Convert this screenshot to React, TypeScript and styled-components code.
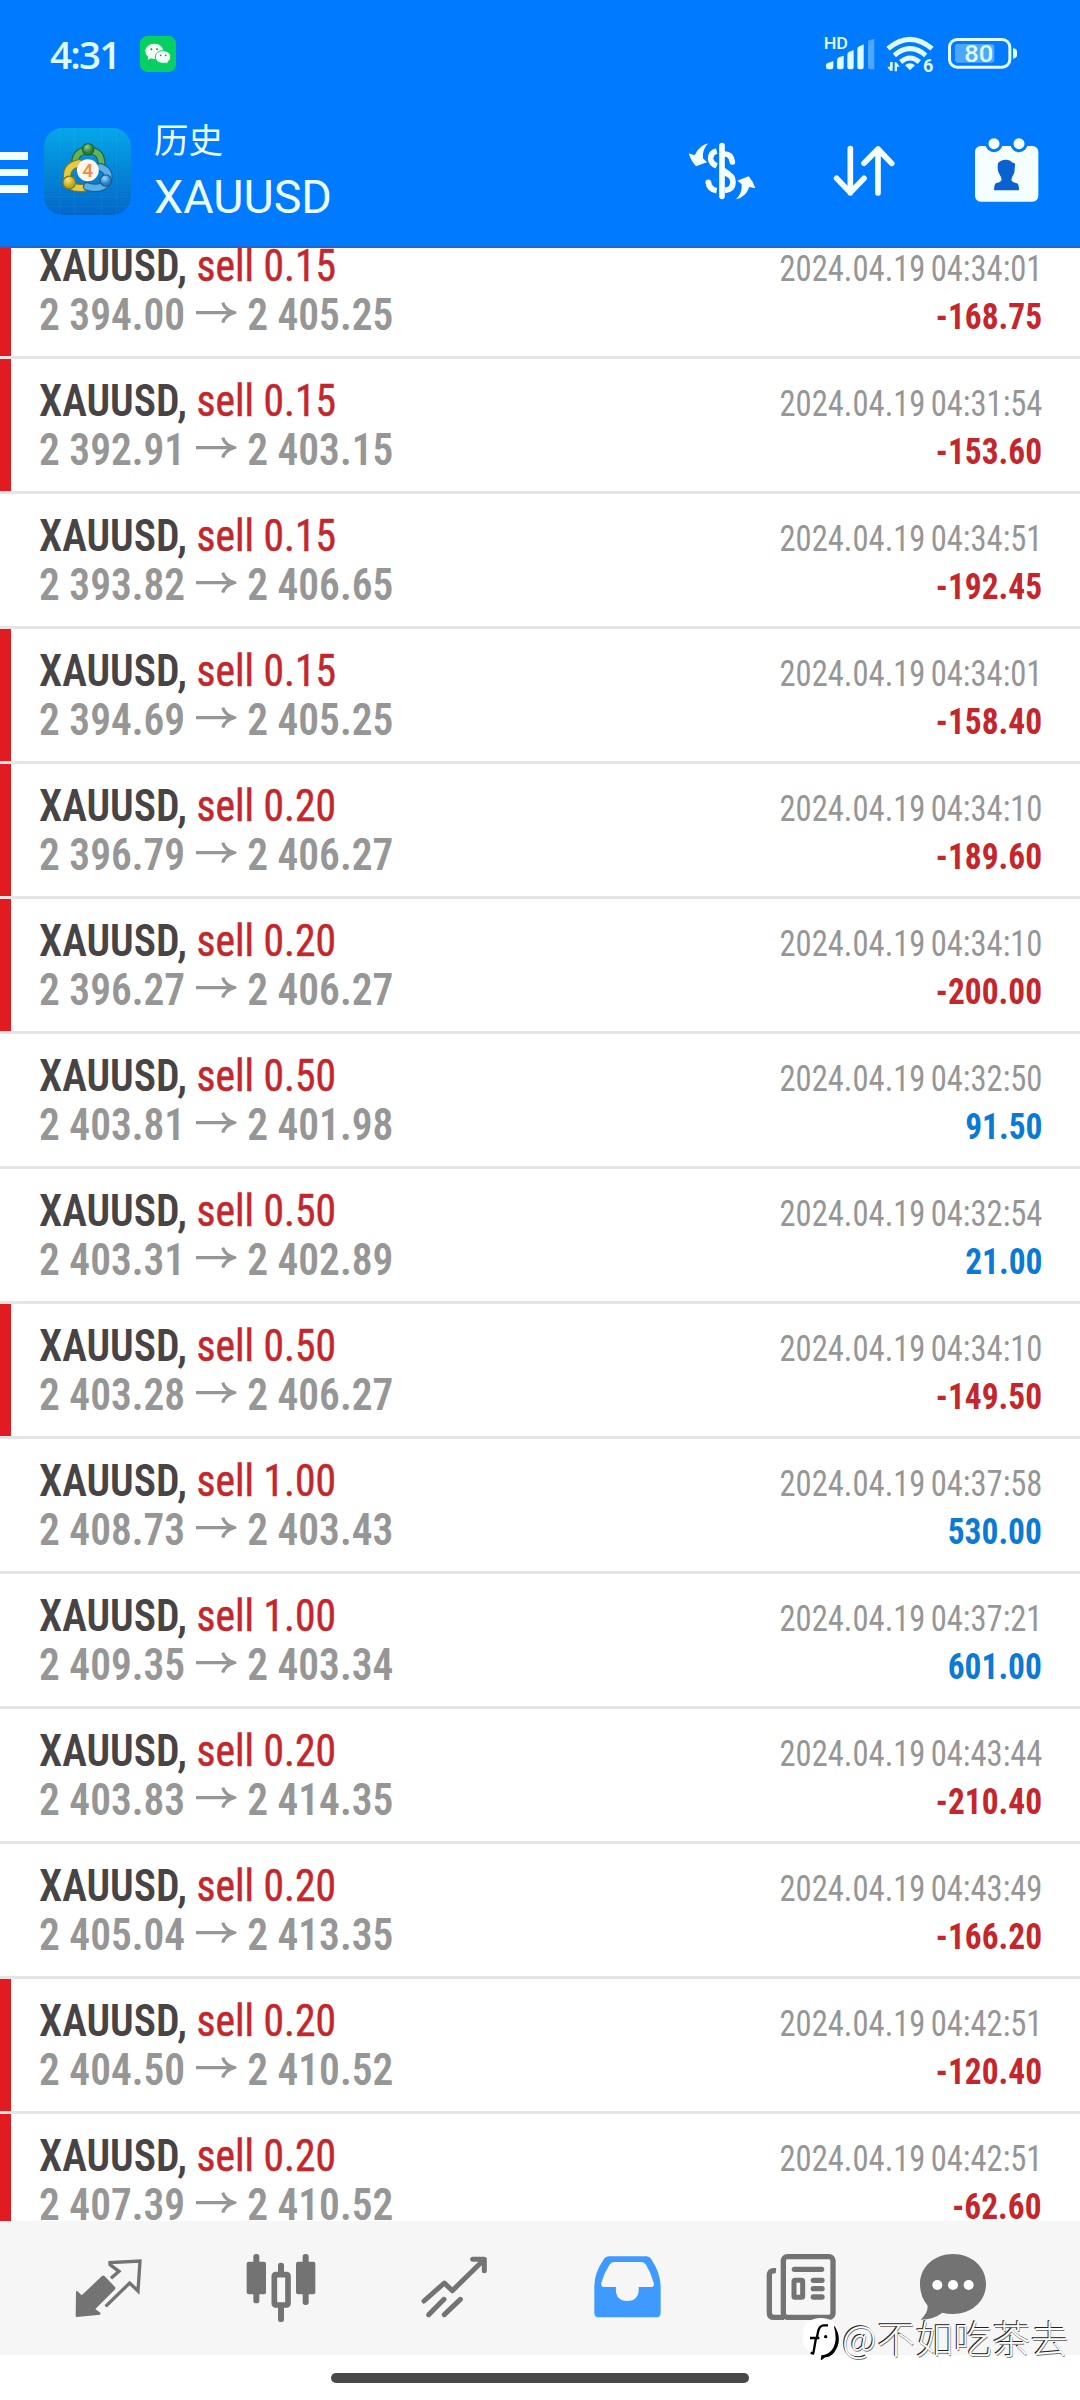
import React from "react";
import styled, { createGlobalStyle } from "styled-components";

const GlobalStyle = createGlobalStyle`
  * { box-sizing: border-box; }
  body { margin: 0; background: #fff; }
  svg { display: block; flex: none; }
`;

const condensed = `"Roboto Condensed", Roboto, sans-serif`;
const cjk = `Roboto, "Noto Sans CJK SC", sans-serif`;

const Screen = styled.div`
  position: relative;
  width: 1080px;
  height: 2400px;
  display: flex;
  flex-direction: column;
  overflow: hidden;
  background: #fff;
`;

const Header = styled.header`
  flex: none;
  height: 248px;
  background: #007aff;
  border-bottom: 2px solid #1c68cf;
  color: #ecffff;
`;

const StatusBar = styled.div`
  display: flex;
  align-items: center;
  height: 108px;
  padding: 0 60px 0 50px;
`;

const Clock = styled.span`
  width: 90px;
  font: 600 38.5px/1 "Open Sans", sans-serif;
  letter-spacing: -1.8px;
  color: #dffbff;
`;

const Spacer = styled.div`
  flex: 1;
`;

const Toolbar = styled.div`
  display: flex;
  align-items: center;
  height: 127px;
`;

const Menu = styled.div`
  display: flex;
  flex-direction: column;
  gap: 9px;
  width: 28px;
  margin: 2px 16px 0 0;
`;

const MenuLine = styled.i`
  height: 7.6px;
  background: #f6ffff;
`;

const Titles = styled.div`
  display: flex;
  flex-direction: column;
  margin-left: 23px;
  font-family: ${cjk};
`;

const Title = styled.span`
  font-size: 34.5px;
  line-height: 50px;
`;

const Subtitle = styled.span`
  font-size: 46.6px;
  line-height: 62px;
`;

const Actions = styled.div`
  display: flex;
  gap: 70px;
  margin-top: -3px;
  padding-right: 38px;
`;

const List = styled.main`
  flex: none;
  height: 1973px;
  overflow: hidden;
`;

const Rows = styled.div`
  margin-top: -24px;
`;

const Row = styled.article<{ $closed?: boolean }>`
  height: 135px;
  padding: 18px 38px 0 39px;
  border-bottom: 3px solid #e5e5e5;
  background: ${(p) => (p.$closed ? "linear-gradient(#e11b1f, #e11b1f) 0 0 / 11px 100% no-repeat" : "none")};
  background-clip: padding-box;
`;

const Line = styled.div`
  display: flex;
  justify-content: space-between;
  align-items: baseline;
  height: 48px;
  line-height: 48px;
  font-family: ${condensed};
  white-space: pre;
`;

const Order = styled.span`
  font-size: 44px;
  transform: scaleX(0.945);
  transform-origin: left;
`;

const Symbol = styled.b`
  font-weight: 600;
  color: #484446;
`;

const Side = styled.span`
  font-weight: 400;
  color: #c4262c;
  -webkit-text-stroke: 0.5px #c4262c;
`;

const Prices = styled.span`
  display: flex;
  align-items: baseline;
  font-size: 44px;
  font-weight: 600;
  color: #969696;
  transform: translateY(0.6px) scaleX(0.94);
  transform-origin: left;
`;

const Arrow = styled.svg`
  margin: 0 11px 0 12px;
  position: relative;
  top: -6px;
`;

const Time = styled.time`
  font-size: 36.5px;
  word-spacing: -2.5px;
  color: #969696;
  transform: scaleX(0.893);
  transform-origin: right;
`;

const Profit = styled.span<{ $up: boolean }>`
  font-size: 36.5px;
  font-weight: 700;
  color: ${(p) => (p.$up ? "#0a7ad6" : "#c4262c")};
  transform: scaleX(0.915);
  transform-origin: right;
`;

const TabBar = styled.nav`
  flex: none;
  display: grid;
  grid-template-columns: 173px 173px 174px 173px 152px 72px;
  align-items: center;
  height: 134px;
  padding-left: 72px;
  background: #f6f6f6;
`;

const HomeArea = styled.footer`
  flex: 1;
  display: flex;
  justify-content: center;
  padding-top: 18px;
`;

const HomePill = styled.i`
  width: 418px;
  height: 10px;
  border-radius: 5px;
  background: #484848;
`;

const Watermark = styled.div`
  position: absolute;
  left: 802px;
  top: 2314px;
  display: flex;
  align-items: center;
  gap: 2px;
  font: 300 38px/46px "Noto Sans CJK SC", sans-serif;
  letter-spacing: 0.4px;
  color: #fff;
  text-shadow: -1px -1px 0 #222, 0.5px 0.5px 0 #777;
  white-space: nowrap;
`;

type Deal = [lot: string, open: string, close: string, time: string, profit: string, closed: boolean];

const deals: Deal[] = [
  ["0.15", "2 394.00", "2 405.25", "04:34:01", "-168.75", true],
  ["0.15", "2 392.91", "2 403.15", "04:31:54", "-153.60", true],
  ["0.15", "2 393.82", "2 406.65", "04:34:51", "-192.45", false],
  ["0.15", "2 394.69", "2 405.25", "04:34:01", "-158.40", true],
  ["0.20", "2 396.79", "2 406.27", "04:34:10", "-189.60", true],
  ["0.20", "2 396.27", "2 406.27", "04:34:10", "-200.00", true],
  ["0.50", "2 403.81", "2 401.98", "04:32:50", "91.50", false],
  ["0.50", "2 403.31", "2 402.89", "04:32:54", "21.00", false],
  ["0.50", "2 403.28", "2 406.27", "04:34:10", "-149.50", true],
  ["1.00", "2 408.73", "2 403.43", "04:37:58", "530.00", false],
  ["1.00", "2 409.35", "2 403.34", "04:37:21", "601.00", false],
  ["0.20", "2 403.83", "2 414.35", "04:43:44", "-210.40", false],
  ["0.20", "2 405.04", "2 413.35", "04:43:49", "-166.20", false],
  ["0.20", "2 404.50", "2 410.52", "04:42:51", "-120.40", true],
  ["0.20", "2 407.39", "2 410.52", "04:42:51", "-62.60", true],
];

const WeChat = () => (
  <svg width="36" height="36" viewBox="0 0 108 108">
    <rect width="108" height="108" rx="22" fill="#07cf62" />
    <path d="M43 23c-15 0-27 10-27 23 0 7 4 13 9 17l-2 9 10-5c3 1 7 2 10 2 15 0 27-10 27-23S58 23 43 23z" fill="#f2fff6" />
    <path d="M69 44c-13 0-23 8-23 19s10 19 23 19c3 0 5 0 7-1l8 4-1-7c5-3 9-9 9-15 0-11-10-19-23-19z" fill="#f2fff6" stroke="#07cf62" strokeWidth="3" />
    <g fill="#2a8a55"><circle cx="34" cy="40" r="3" /><circle cx="51" cy="40" r="3" /><circle cx="62" cy="58" r="2.6" /><circle cx="77" cy="58" r="2.6" /></g>
  </svg>
);

const StatusIcons = () => (
  <svg width="196" height="40" viewBox="552 104 588 120" fill="#dffbff">
    <text x="551" y="150" fontFamily="Roboto" fontWeight="500" fontSize="48" textLength="73" lengthAdjust="spacingAndGlyphs">HD</text>
    <path d="M558 198q0-4 4-6l18-7v18q0 7-7 7h-8q-7 0-7-7zM591 184q0-8 6-10l14-5v35q0 6-6 6h-8q-6 0-6-6zM622 166q0-7 6-9l13-5v52q0 6-6 6h-7q-6 0-6-6zM652 150q0-7 6-9l13-6v69q0 6-6 6h-7q-6 0-6-6z" />
    <path d="M684 128q0-4 5-6l14-3v91h-13q-6 0-6-6z" opacity=".35" />
    <g fill="none" stroke="#dffbff" strokeWidth="15"><path d="M744 148q66-56 132 0" /><path d="M763 168q47-40 94 0" /><path d="M782 188q28-24 56 0" /></g>
    <path d="M795 198q15-12 30 0l-15 15z" />
    <path d="M758 188v26h-8l-8-12h8v-14zM764 216v-27h5l10 13h-8v14z" />
    <text x="849" y="217" fontFamily="Roboto" fontWeight="700" fontSize="55" textLength="31" lengthAdjust="spacingAndGlyphs">6</text>
    <rect x="928.5" y="120.500" width="181" height="83" rx="23" fill="none" stroke="#dffbff" strokeWidth="9" />
    <rect x="945" y="134" width="118" height="56" rx="8" opacity=".35" />
    <path d="M1119 147q12 1 12 10v11q0 9-12 10z" />
    <text x="973" y="188" fontFamily="Roboto" fontWeight="500" fontSize="72" textLength="87" lengthAdjust="spacingAndGlyphs">80</text>
  </svg>
);

const AppLogo = () => (
  <svg width="87" height="87" viewBox="132 384 262 262">
    <defs>
      <linearGradient id="sky" x1="0" y1="0" x2="0" y2="1"><stop offset="0" stopColor="#05a6ea" /><stop offset=".5" stopColor="#0386d6" /><stop offset="1" stopColor="#0368cb" /></linearGradient>
      <radialGradient id="green" cx=".4" cy=".3"><stop offset="0" stopColor="#8fd08a" /><stop offset="1" stopColor="#2c7d35" /></radialGradient>
      <radialGradient id="gold" cx=".4" cy=".3"><stop offset="0" stopColor="#f6e87c" /><stop offset="1" stopColor="#c0a820" /></radialGradient>
      <radialGradient id="blue" cx=".4" cy=".3"><stop offset="0" stopColor="#9fdcfa" /><stop offset="1" stopColor="#2a80c4" /></radialGradient>
    </defs>
    <rect x="132" y="384" width="262" height="262" rx="56" fill="url(#sky)" />
    <path d="M180 384v262M224 384v262M305 384v262M350 384v262M132 420h262M132 590h262M132 620h262" stroke="#fff" strokeOpacity=".05" strokeWidth="3" />
    <g fill="none" strokeLinecap="round">
      <path d="M226 494q-2-42 39-42t40 42" stroke="#23672d" strokeWidth="24" />
      <path d="M226 494q-2-42 39-42t40 42" stroke="#62b35f" strokeWidth="17" />
      <path d="M238 490q-42 8-36 50 10 30 50 24" stroke="#857718" strokeWidth="25" />
      <path d="M238 490q-42 8-36 50 10 30 50 24" stroke="#e0cc46" strokeWidth="18" />
      <path d="M302 502q30 12 22 42-18 30-62 16" stroke="#1c5f98" strokeWidth="26" />
      <path d="M302 502q30 12 22 42-18 30-62 16" stroke="#5cb0e6" strokeWidth="19" />
    </g>
    <g strokeWidth="4">
      <circle cx="265" cy="448" r="17" fill="url(#green)" stroke="#23672d" />
      <circle cx="208" cy="548" r="19" fill="url(#gold)" stroke="#857718" />
      <circle cx="318" cy="542" r="17" fill="url(#blue)" stroke="#1c5f98" />
    </g>
    <circle cx="264" cy="511" r="33" fill="#fff6ea" />
    <text x="264" y="532" textAnchor="middle" fontFamily="Roboto" fontWeight="500" fontSize="58" fill="#f0884a">4</text>
  </svg>
);

const CurrencyIcon = () => (
  <svg width="72" height="72" viewBox="138 402 216 216">
    <g fill="none" stroke="#f6ffff" strokeWidth="17">
      <path d="M230 453q-19 5-18 24 1 13 18 21" />
      <path d="M255 462q19 0 22 24" strokeLinecap="round" />
      <path d="M255 519q24 6 24 28 0 22-24 24" />
      <path d="M205 546q2 22 25 26" />
      <path d="M246 437v152" strokeLinecap="round" />
      <path d="M247 509l20 14" />
    </g>
    <circle cx="205" cy="547" r="8.500" fill="#f6ffff" />
    <path d="M205 430q-19 18-16 45l12 12-33 12q-15-16-22-39l18 6q14-30 41-36z" fill="#f6ffff" />
    <path d="M288 598q19-18 17-45l-13-11 34-13q14 16 20 36l-18-4q-11 31-40 37z" fill="#f6ffff" />
  </svg>
);

const SortIcon = () => (
  <svg width="72" height="72" viewBox="567 402 216 216" fill="none" stroke="#f6ffff" strokeWidth="17" strokeLinecap="round" strokeLinejoin="round">
    <path d="M634 446v132M593 535l41 43 41-43M717 579V447M675 490l42-43 41 43" />
  </svg>
);

const CalendarIcon = () => (
  <svg width="72" height="72" viewBox="990 402 216 216">
    <rect x="1005" y="438" width="190" height="167" rx="17" fill="#f6ffff" />
    <g fill="#f6ffff" stroke="#007aff" strokeWidth="9"><circle cx="1062" cy="431" r="21" /><circle cx="1137" cy="431" r="21" /></g>
    <path d="M1089 437v-14h20v14z" fill="#007aff" />
    <path d="M1100 479q10 0 18 9 9-1 7 8l-2 22q-8 14-9 21 2 8 17 11 6 3 6 21h-75q0-19 7-22 14-3 16-10-1-8-9-21-5-13-2-28 8-12 26-11z" fill="#0a62d0" />
  </svg>
);

const grey = "#737373";

const tabs = [
  <svg key="quotes" width="72" height="72" viewBox="216 156 216 216">
    <path d="M306 228q4-3 8 1l31 32q3 4-1 8l-58 58 16 12-2 5-69 7q-4 0-4-4l1-72 3-3 14 14z" fill={grey} />
    <path d="M333 235l24-21-27-20v-6l90-5-6 90-25-24-72 70" fill="none" stroke={grey} strokeWidth="10" />
  </svg>,
  <svg key="charts" width="72" height="72" viewBox="735 156 216 216" fill={grey}>
    <rect x="760" y="162" width="18" height="148" rx="8" />
    <rect x="740" y="185" width="58" height="98" rx="6" />
    <rect x="908" y="162" width="18" height="153" rx="8" />
    <rect x="888" y="185" width="58" height="98" rx="6" />
    <rect x="834" y="188" width="18" height="40" rx="8" />
    <rect x="834" y="312" width="18" height="54" rx="7" />
    <rect x="823" y="224" width="41" height="91" rx="4" fill="#f6f6f6" stroke={grey} strokeWidth="17" />
  </svg>,
  <svg key="trade" width="72" height="72" viewBox="174 156 216 216" fill="none" stroke={grey} strokeWidth="15" strokeLinecap="round" strokeLinejoin="round">
    <path d="M192 303l61-54 24 23 94-92M338 178h35v34M206 344l46-46M253 344l48-46" />
  </svg>,
  <svg key="history" width="72" height="72" viewBox="696 156 216 216">
    <path fillRule="evenodd" d="M748 169h110q12 0 17 11 25 36 27 77v81q0 14-14 14H717q-14 0-14-14v-81q1-40 27-77 6-11 18-11zM762 186q-9 0-14 9-16 25-24 53-2 13 8 13h36q-4 41 34 42 37-1 34-42h36q13 0 9-13-8-30-23-54-5-8-14-8z" fill="#3f9aff" />
  </svg>,
  <svg key="news" width="72" height="72" viewBox="135 156 216 216" fill="none" stroke={grey} strokeWidth="16" strokeLinecap="round">
    <rect x="190" y="170" width="149" height="182" rx="12" />
    <path d="M168 212q-20-2-20 14v112q0 14 14 14h30" strokeLinecap="butt" />
    <path d="M223 208h82M280 241h26M280 266h26M280 291h26" />
    <rect x="222" y="241" width="26" height="51" rx="3" strokeWidth="15" />
  </svg>,
  <svg key="chat" width="72" height="72" viewBox="591 156 216 216">
    <path d="M699 162c55 0 99 38 99 90s-44 90-99 90q-17 0-32-4-27 21-65 21 22-20 21-42-23-27-23-65c0-52 44-90 99-90z" fill={grey} />
    <g fill="#fff"><circle cx="652" cy="255" r="15" /><circle cx="699" cy="255" r="15" /><circle cx="746" cy="255" r="15" /></g>
  </svg>,
];

const WatermarkLogo = () => (
  <svg width="38" height="46" viewBox="20 20 114 138">
    <path d="M74 32q58 0 58 56 0 38-28 52l-28 17-2-17Q22 140 22 88q0-54 52-56z" fill="#fff" />
    <path d="M98 54H84q-12 1-16 20l-4 20M44 92h28M62 92l-8 46M46 136l10 4" fill="none" stroke="#000" strokeWidth="7" />
    <path d="M118 56q26 42-2 80-10 12-26 14l-14 10 2-16q40-6 43-50 0-20-5-36z" />
    <circle cx="91" cy="88" r="5" />
  </svg>
);

export default function App() {
  return (
    <Screen>
      <GlobalStyle />
      <Header>
        <StatusBar>
          <Clock>4:31</Clock>
          <WeChat />
          <Spacer />
          <StatusIcons />
        </StatusBar>
        <Toolbar>
          <Menu>
            <MenuLine />
            <MenuLine />
            <MenuLine />
          </Menu>
          <AppLogo />
          <Titles>
            <Title>历史</Title>
            <Subtitle>XAUUSD</Subtitle>
          </Titles>
          <Spacer />
          <Actions>
            <CurrencyIcon />
            <SortIcon />
            <CalendarIcon />
          </Actions>
        </Toolbar>
      </Header>
      <List>
        <Rows>
          {deals.map(([lot, open, close, time, profit, closed], i) => (
            <Row key={i} $closed={closed}>
              <Line>
                <Order>
                  <Symbol>XAUUSD,</Symbol> <Side>sell {lot}</Side>
                </Order>
                <Time>2024.04.19 {time}</Time>
              </Line>
              <Line>
                <Prices>
                  {open}
                  <Arrow width="43" height="22" viewBox="0 0 43 22" fill="none" stroke="#969696" strokeWidth="3.4">
                    <path d="M0 11h40M28.500 1q2 7 12 10-10 3-12 10" />
                  </Arrow>
                  {close}
                </Prices>
                <Profit $up={!profit.startsWith("-")}>{profit}</Profit>
              </Line>
            </Row>
          ))}
        </Rows>
      </List>
      <TabBar>{tabs}</TabBar>
      <HomeArea>
        <HomePill />
      </HomeArea>
      <Watermark>
        <WatermarkLogo />
        @不如吃茶去
      </Watermark>
    </Screen>
  );
}
